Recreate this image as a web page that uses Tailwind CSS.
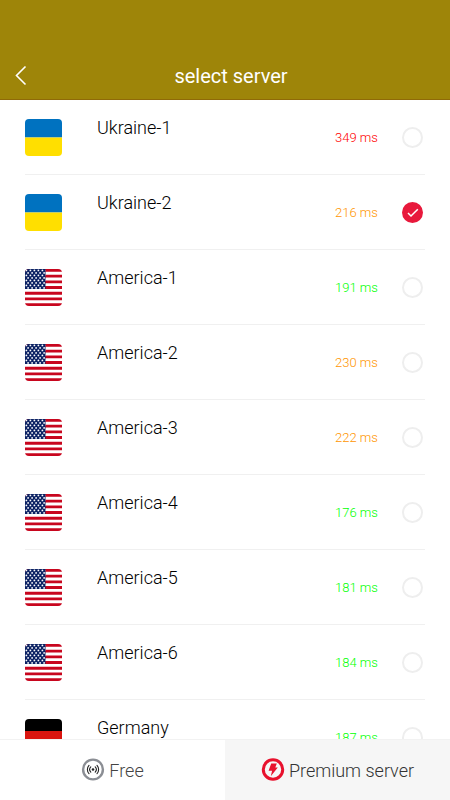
<!DOCTYPE html>
<html lang="en">
<head>
    <meta charset="UTF-8">
    <meta name="viewport" content="width=device-width, initial-scale=1.0">
    <title>select server</title>
    <script src="https://cdn.jsdelivr.net/npm/@tailwindcss/browser@4"></script>
</head>
<body class="h-screen flex flex-col overflow-hidden bg-white font-['Roboto',sans-serif] text-black">

    <!-- Flags -->
    <svg class="absolute w-0 h-0">
        <defs>
            <pattern id="stars" width="4" height="5" patternUnits="userSpaceOnUse">
                <circle cx="1.4" cy="1.4" r=".9" fill="#fff"/>
                <circle cx="3.1" cy="3.9" r=".9" fill="#fff"/>
            </pattern>
        </defs>
        <symbol id="flag-ua" viewBox="0 0 37 37">
            <path fill="#0072c0" d="M0 0h37v18.5H0z"/>
            <path fill="#ffdf00" d="M0 18.5h37V37H0z"/>
        </symbol>
        <symbol id="flag-us" viewBox="0 0 37 37">
            <path fill="#fff" d="M0 0h37v37H0z"/>
            <path stroke="#c8061e" stroke-width="2.85" d="M0 1.4h37M0 7.1h37M0 12.8h37M0 18.5h37M0 24.2h37M0 29.9h37M0 35.6h37"/>
            <path fill="#0b2163" d="M0 0h20.5v20H0z"/>
            <path fill="url(#stars)" d="M0 0h20.5v20H0z"/>
        </symbol>
        <symbol id="flag-de" viewBox="0 0 37 37">
            <path fill="#000" d="M0 0h37v12H0z"/>
            <path fill="#d9150f" d="M0 12h37v13H0z"/>
            <path fill="#ffce00" d="M0 25h37v12H0z"/>
        </symbol>
    </svg>

    <!-- Header -->
    <header class="shrink-0 grid grid-cols-[48px_1fr_36px] items-center bg-[#9e8509] border-b border-[#8f6a08] pt-[54px] pb-px">
        <button type="button" aria-label="Back" class="h-11 pl-3.5">
            <svg class="w-4 h-6" viewBox="0 0 16 24" fill="none" stroke="#fff" stroke-width="1.6"><path d="M11.5 2.5 2.5 11.5l9 9"/></svg>
        </button>
        <h1 class="text-xl text-white text-center">select server</h1>
    </header>

    <!-- Server list -->
    <main class="flex-1 min-h-0 overflow-hidden">
        <ul id="servers" class="px-[25px]"></ul>
    </main>

    <!-- Tabs -->
    <nav class="shrink-0 grid grid-cols-2 h-[61px] border-t border-[#f2f2f2] text-lg font-light">
        <button type="button" class="flex items-center justify-center gap-1 text-[#444]">
            <svg class="w-6 h-6" viewBox="0 0 24 24" fill="none">
                <circle cx="12" cy="11.5" r="9.9" stroke="#8b8e94" stroke-width="2.4"/>
                <circle cx="12" cy="11.5" r="1.3" fill="#222"/>
                <path stroke="#222" stroke-width="1.1" stroke-linecap="round" d="M9.8 8.9a3.8 3.8 0 0 0 0 5.2M14.2 8.9a3.8 3.8 0 0 1 0 5.2M8 7.4a6 6 0 0 0 0 8.2M16 7.4a6 6 0 0 1 0 8.2"/>
            </svg>
            <span class="pt-0.5">Free</span>
        </button>
        <button type="button" class="flex items-center justify-center gap-1 bg-[#f6f6f6] text-[#333]">
            <svg class="w-6 h-6" viewBox="0 0 24 24" fill="none">
                <circle cx="12" cy="11.5" r="9.7" stroke="#e8112d" stroke-width="3"/>
                <path fill="#e8112d" d="M10.2 5.5h5.6l-1.5 4.1h2.5L9.8 18.3l1.3-5.6H7.6z"/>
            </svg>
            <span class="pt-0.5">Premium server</span>
        </button>
    </nav>

    <script>
        const servers = [
            { name: "Ukraine-1", flag: "ua", ping: 349 },
            { name: "Ukraine-2", flag: "ua", ping: 216, selected: true },
            { name: "America-1", flag: "us", ping: 191 },
            { name: "America-2", flag: "us", ping: 230 },
            { name: "America-3", flag: "us", ping: 222 },
            { name: "America-4", flag: "us", ping: 176 },
            { name: "America-5", flag: "us", ping: 181 },
            { name: "America-6", flag: "us", ping: 184 },
            { name: "Germany", flag: "de", ping: 187 }
        ];

        function pingColor(ping) {
            if (ping < 200) return "text-[#00ff00]";
            if (ping < 300) return "text-[#ff9500]";
            return "text-[#ff0000]";
        }

        document.getElementById("servers").innerHTML = servers.map((s, i) => `
            <li class="border-b border-[#f0f0f0]">
                <label for="server-${i}" class="flex items-center h-[74px] pr-0.5">
                    <svg class="w-[37px] h-[37px] rounded-[4px]"><use href="#flag-${s.flag}"/></svg>
                    <span class="flex-1 self-start pt-4 pl-[35px] text-lg leading-6 font-light">${s.name}</span>
                    <span class="w-[67px] pt-0.5 text-[13px] leading-5 font-light ${pingColor(s.ping)}">${s.ping} ms</span>
                    <span class="grid">
                        <input id="server-${i}" type="radio" name="server" ${s.selected ? "checked" : ""} class="peer appearance-none col-start-1 row-start-1 w-[21px] h-[21px] rounded-full border-2 border-[#eee] checked:border-[#e8193c] checked:bg-[#e8193c]">
                        <svg class="hidden peer-checked:block col-start-1 row-start-1 w-[21px] h-[21px] pointer-events-none" viewBox="0 0 21 21" fill="none" stroke="#fff" stroke-width="1.5"><path d="m6 11 3 3 6.8-6.8"/></svg>
                    </span>
                </label>
            </li>
        `).join("");
    </script>
</body>
</html>
